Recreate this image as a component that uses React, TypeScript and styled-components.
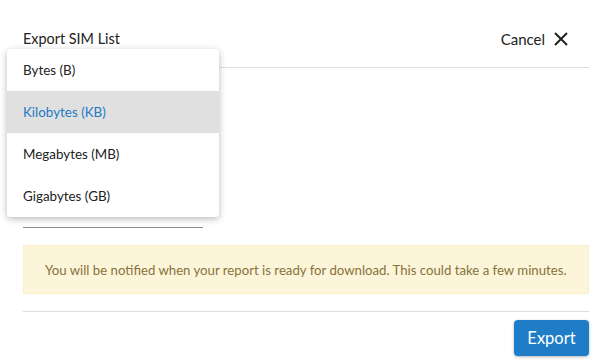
import React from 'react';
import styled, { createGlobalStyle } from 'styled-components';

const GlobalStyle = createGlobalStyle`
    body {
        margin: 0;
        background: #ffffff;
        font-family: 'Lato', 'Noto Sans', sans-serif;
        color: #222222;
    }
`;

const Page = styled.div`
    position: relative;
    width: 609px;
    height: 361px;
    padding: 20px 20px 0 23px;
    box-sizing: border-box;
    overflow: hidden;
`;

const Header = styled.div`
    display: flex;
    align-items: center;
    justify-content: space-between;
    height: 47px;
    padding-right: 21px;
    border-bottom: 1px solid #dddddd;
`;

const Title = styled.h1`
    margin: 0;
    font-size: 14.4px;
    font-weight: 400;
    color: #222222;
    transform: translateY(-5px);
`;

const CancelButton = styled.button`
    display: flex;
    align-items: center;
    gap: 9px;
    padding: 0;
    border: none;
    background: none;
    font-family: inherit;
    font-size: 15px;
    color: #222222;
    transform: translateY(-5px);
    cursor: pointer;
`;

const FieldArea = styled.div`
    height: 160px;
    display: flex;
    align-items: flex-end;
`;

const SelectBox = styled.div`
    width: 180px;
    height: 30px;
    border-bottom: 1px solid #8c8c8c;
`;

const Notice = styled.div`
    margin-top: 17px;
    height: 49px;
    display: flex;
    align-items: center;
    padding-left: 21px;
    box-sizing: border-box;
    background: #fdf5d9;
    border: 1px solid #fbf0cc;
    font-size: 13.2px;
    color: #86733a;
`;

const Footer = styled.div`
    margin-top: 17px;
    padding-top: 8px;
    border-top: 1px solid #dddddd;
    display: flex;
    justify-content: flex-end;
`;

const ExportButton = styled.button`
    width: 75px;
    height: 36px;
    border: none;
    border-radius: 4px;
    background: #1f7dc8;
    color: #ffffff;
    font-family: inherit;
    font-size: 16.5px;
    box-shadow: 0 1px 3px rgba(0, 0, 0, 0.3);
    cursor: pointer;
`;

const Menu = styled.ul`
    position: absolute;
    left: 7px;
    top: 49px;
    width: 212px;
    margin: 0;
    padding: 0;
    list-style: none;
    background: #ffffff;
    border-radius: 4px;
    overflow: hidden;
    box-shadow: 0 2px 7px rgba(0, 0, 0, 0.28);
`;

const MenuItem = styled.li<{ $active?: boolean }>`
    height: 42px;
    display: flex;
    align-items: center;
    padding-left: 16px;
    font-size: 13.4px;
    background: ${(p) => (p.$active ? '#e0e0e0' : '#ffffff')};
    color: ${(p) => (p.$active ? '#1f7ac4' : '#222222')};
`;

const units = ['Bytes (B)', 'Kilobytes (KB)', 'Megabytes (MB)', 'Gigabytes (GB)'];

function CloseIcon() {
    return (
        <svg width="14" height="14" viewBox="0 0 14 14">
            <path d="M1 1 L13 13 M13 1 L1 13" stroke="#222222" strokeWidth="2" />
        </svg>
    );
}

export default function App() {
    return (
        <Page>
            <GlobalStyle />
            <Header>
                <Title>Export SIM List</Title>
                <CancelButton>
                    Cancel
                    <CloseIcon />
                </CancelButton>
            </Header>
            <FieldArea>
                <SelectBox />
            </FieldArea>
            <Notice>You will be notified when your report is ready for download. This could take a few minutes.</Notice>
            <Footer>
                <ExportButton>Export</ExportButton>
            </Footer>
            <Menu>
                {units.map((u) => (
                    <MenuItem key={u} $active={u === 'Kilobytes (KB)'}>
                        {u}
                    </MenuItem>
                ))}
            </Menu>
        </Page>
    );
}
